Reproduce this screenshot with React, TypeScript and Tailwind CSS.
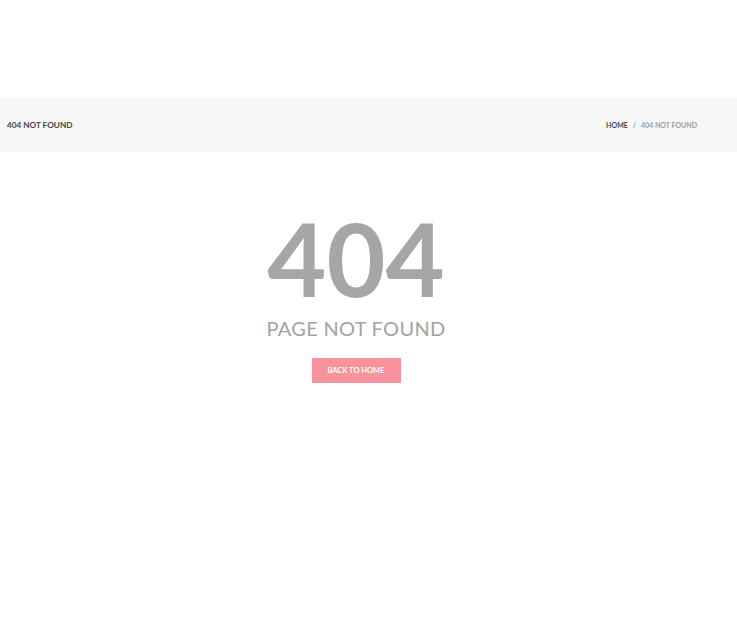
export default function App() {
  return (
    <div className="min-h-[635px] bg-white font-['Lato',sans-serif]">
      <div className="h-[98px]" />
      <div className="flex h-[54px] items-center justify-between bg-[#f7f7f7] pl-[7px] pr-[40px]">
        <h1 className="text-[8.2px] font-bold text-[#444]">404 NOT FOUND</h1>
        <div className="flex items-center gap-[5px] text-[7px] font-bold">
          <a className="text-[#444]">HOME</a>
          <span className="text-[#999]">/</span>
          <span className="text-[#9aa0a6]">404 NOT FOUND</span>
        </div>
      </div>
      <div className="flex flex-col items-center pr-[25px] pt-[55px]">
        <div className="text-[102px] font-bold leading-none text-[#a6a6a6]">404</div>
        <div className="mt-[9px] text-[20px] font-normal leading-none tracking-[0.3px] text-[#a3a3a3]">PAGE NOT FOUND</div>
        <a className="mt-[20px] flex h-[25px] w-[89px] items-center justify-center bg-[#f7939c] text-[7.5px] font-bold text-white">
          BACK TO HOME
        </a>
      </div>
    </div>
  );
}
